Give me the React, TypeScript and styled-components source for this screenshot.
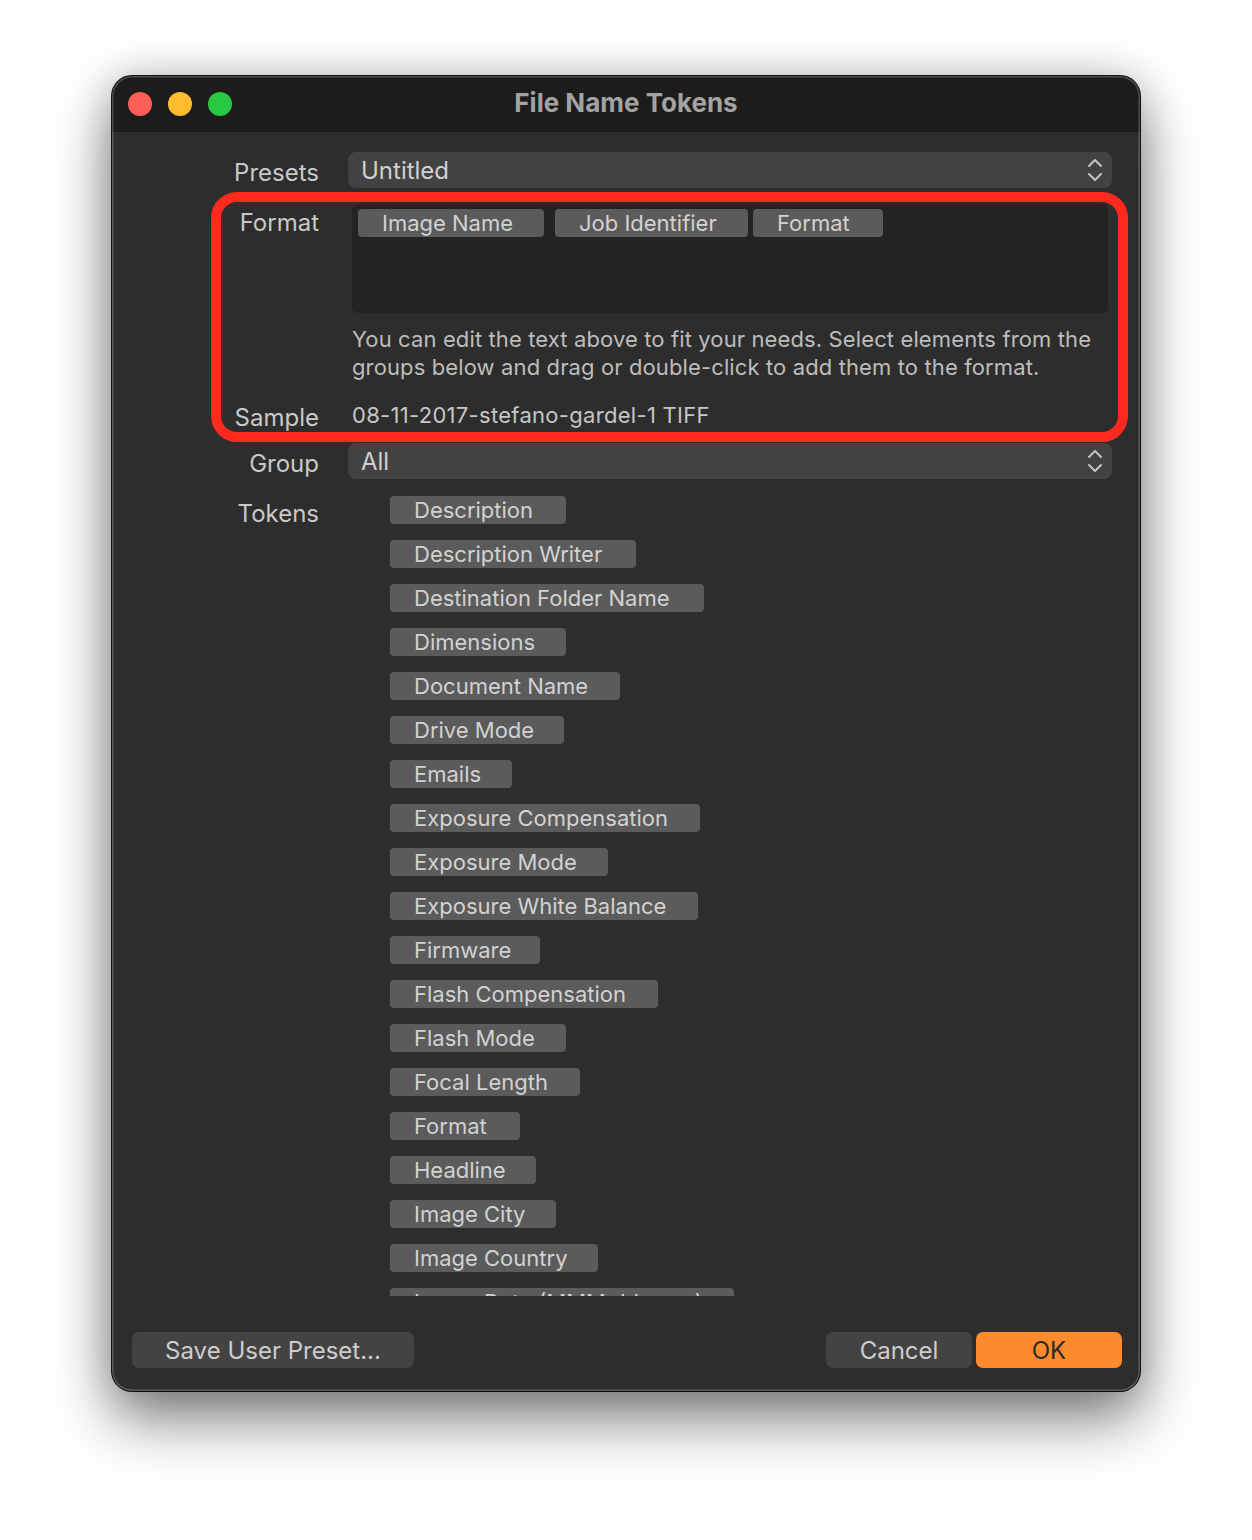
import React from "react";
import styled, { createGlobalStyle } from "styled-components";

const GlobalStyle = createGlobalStyle`
  html, body { margin: 0; padding: 0; background: #ffffff; }
  body { font-family: Inter, "Noto Sans", "Liberation Sans", sans-serif; }
  * { box-sizing: border-box; }
`;

const Page = styled.div`
  padding: 76px 0 0 112px;
  width: 1252px;
  height: 1540px;
`;

const Window = styled.div`
  position: relative;
  width: 1028px;
  border-radius: 20px;
  background: #2d2d2d;
  overflow: hidden;
  box-shadow: 0 0 0 1px #111, 0 28px 60px rgba(0, 0, 0, 0.5), 0 0 40px rgba(0, 0, 0, 0.18);
  &::after {
    content: "";
    position: absolute;
    inset: 0;
    border-radius: 20px;
    box-shadow: inset 0 0 0 1.5px rgba(255, 255, 255, 0.22);
    pointer-events: none;
  }
`;

const TitleBar = styled.div`
  position: relative;
  height: 56px;
  background: #1c1c1c;
  display: flex;
  align-items: center;
  padding-left: 16px;
  gap: 16px;
`;

const Light = styled.span<{ $color: string }>`
  width: 24px;
  height: 24px;
  border-radius: 50%;
  background: ${(p) => p.$color};
`;

const Title = styled.div`
  position: absolute;
  left: 0;
  right: 0;
  top: 0;
  height: 56px;
  line-height: 54px;
  text-align: center;
  font-size: 26px;
  font-weight: 700;
  color: #a3a3a3;
  pointer-events: none;
`;

const Body = styled.div`
  display: flex;
  flex-direction: column;
  padding: 20px 28px 23px 0;
`;

const Row = styled.div<{ $mt?: number }>`
  display: grid;
  grid-template-columns: 207px 1fr;
  column-gap: 29px;
  align-items: start;
  margin-top: ${(p) => p.$mt ?? 0}px;
`;

const Label = styled.div<{ $top: number }>`
  text-align: right;
  font-size: 24px;
  line-height: 32px;
  color: #c9c9c9;
  padding-top: ${(p) => p.$top}px;
`;

const Popup = styled.div`
  position: relative;
  height: 36px;
  border-radius: 8px;
  background: #424242;
  display: flex;
  align-items: center;
  padding-left: 13px;
  font-size: 24px;
  color: #d0d0d0;
`;

const Chevrons = styled.svg`
  position: absolute;
  right: 9px;
  top: 5px;
`;

const FormatSection = styled.div`
  position: relative;
  margin-top: 15px;
  display: flex;
  flex-direction: column;
`;

const Highlight = styled.div`
  position: absolute;
  top: -12px;
  bottom: -8px;
  left: 99px;
  right: -16px;
  border: 10px solid #ff2a1d;
  border-radius: 26px;
  pointer-events: none;
`;

const FormatField = styled.div`
  margin: 0 4px;
  height: 109px;
  background: #232323;
  border-radius: 6px;
  padding: 5px 6px;
  display: flex;
  align-items: flex-start;
`;

const Token = styled.div<{ $w: number; $ml?: number }>`
  width: ${(p) => p.$w}px;
  margin-left: ${(p) => p.$ml ?? 0}px;
  height: 28px;
  border-radius: 4px;
  background: #5b5b5b;
  color: #d2d2d2;
  font-size: 22px;
  line-height: 28px;
  padding-left: 24px;
  white-space: nowrap;
  overflow: hidden;
  flex-shrink: 0;
`;

const Help = styled.div`
  margin: 12px 0 0 4px;
  font-size: 22px;
  letter-spacing: 0.12px;
  line-height: 28px;
  color: #bdbdbd;
`;

const SampleText = styled.div`
  margin-left: 4px;
  font-size: 22px;
  letter-spacing: 0.3px;
  line-height: 28px;
  color: #c6c6c6;
`;

const TokenList = styled.div`
  height: 804px;
  overflow: hidden;
  padding: 4px 0 0 42px;
  display: flex;
  flex-direction: column;
  align-items: flex-start;
  gap: 16px;
`;

const Footer = styled.div`
  margin-top: 36px;
  padding-left: 20px;
  display: flex;
  align-items: center;
`;

const Button = styled.button<{ $w: number; $primary?: boolean }>`
  width: ${(p) => p.$w}px;
  height: 36px;
  border: none;
  border-radius: 7px;
  font-family: inherit;
  font-size: 24px;
  background: ${(p) => (p.$primary ? "#fd8a2d" : "#434343")};
  color: ${(p) => (p.$primary ? "#2a2a2a" : "#cdcdcd")};
  padding: 0;
`;

const Spacer = styled.div`
  flex: 1;
`;

const ButtonGroup = styled.div`
  display: flex;
  gap: 4px;
  margin-right: -10px;
`;

const tokens: [string, number][] = [
  ["Description", 176],
  ["Description Writer", 246],
  ["Destination Folder Name", 314],
  ["Dimensions", 176],
  ["Document Name", 230],
  ["Drive Mode", 174],
  ["Emails", 122],
  ["Exposure Compensation", 310],
  ["Exposure Mode", 218],
  ["Exposure White Balance", 308],
  ["Firmware", 150],
  ["Flash Compensation", 268],
  ["Flash Mode", 176],
  ["Focal Length", 190],
  ["Format", 130],
  ["Headline", 146],
  ["Image City", 166],
  ["Image Country", 208],
  ["Image Date (MMM dd yyyy)", 344],
];

const UpDown = () => (
  <Chevrons width="16" height="26" viewBox="0 0 16 26" fill="none">
    <path d="M2 9 L8 3 L14 9" stroke="#c4c4c4" strokeWidth="2" strokeLinecap="round" strokeLinejoin="round" />
    <path d="M2 17 L8 23 L14 17" stroke="#c4c4c4" strokeWidth="2" strokeLinecap="round" strokeLinejoin="round" />
  </Chevrons>
);

export default function App() {
  return (
    <Page>
      <GlobalStyle />
      <Window>
        <TitleBar>
          <Light $color="#fe5f57" />
          <Light $color="#febc2e" />
          <Light $color="#28c840" />
          <Title>File Name Tokens</Title>
        </TitleBar>
        <Body>
          <Row>
            <Label $top={5}>Presets</Label>
            <Popup>
              Untitled
              <UpDown />
            </Popup>
          </Row>

          <FormatSection>
            <Row>
              <Label $top={3}>Format</Label>
              <div>
                <FormatField>
                  <Token $w={186}>Image Name</Token>
                  <Token $w={193} $ml={11}>Job Identifier</Token>
                  <Token $w={130} $ml={5}>Format</Token>
                </FormatField>
                <Help>
                  You can edit the text above to fit your needs. Select elements from the groups below and drag or
                  double-click to add them to the format.
                </Help>
              </div>
            </Row>
            <Row $mt={20}>
              <Label $top={1}>Sample</Label>
              <SampleText>08-11-2017-stefano-gardel-1 TIFF</SampleText>
            </Row>
            <Highlight />
          </FormatSection>

          <Row $mt={9}>
            <Label $top={5}>Group</Label>
            <Popup>
              All
              <UpDown />
            </Popup>
          </Row>

          <Row $mt={12}>
            <Label $top={6}>Tokens</Label>
            <TokenList>
              {tokens.map(([name, w]) => (
                <Token key={name} $w={w}>
                  {name}
                </Token>
              ))}
            </TokenList>
          </Row>

          <Footer>
            <Button $w={282}>Save User Preset...</Button>
            <Spacer />
            <ButtonGroup>
              <Button $w={146}>Cancel</Button>
              <Button $w={146} $primary>
                OK
              </Button>
            </ButtonGroup>
          </Footer>
        </Body>
      </Window>
    </Page>
  );
}
